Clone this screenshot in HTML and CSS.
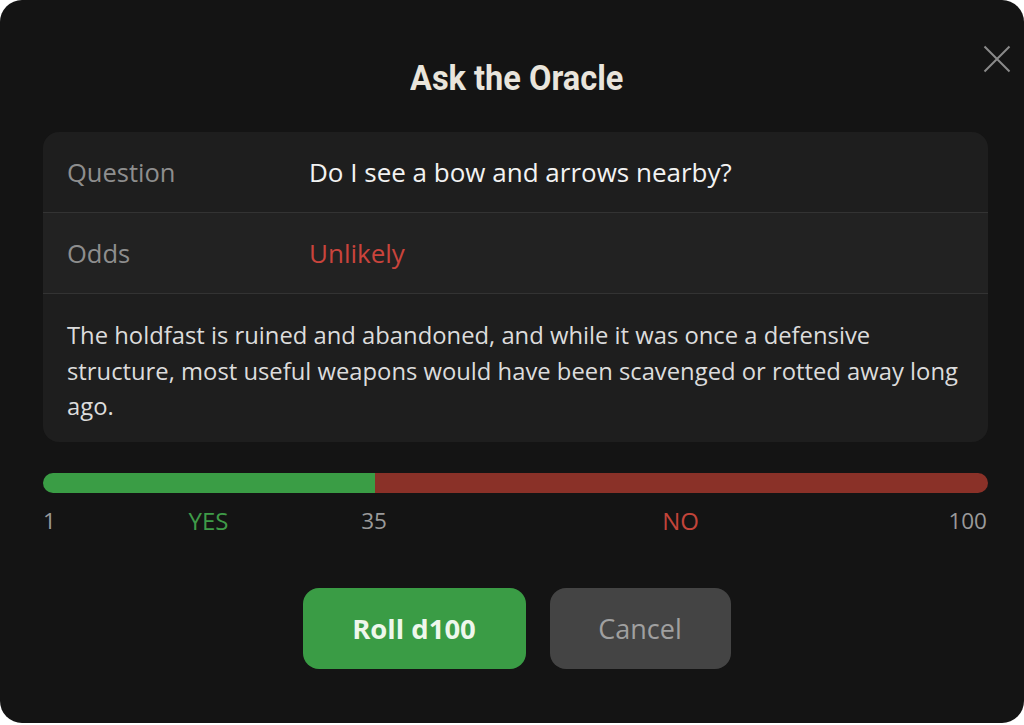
FILE: index.html
```html
<!DOCTYPE html>
<html>
<head>
<meta charset="utf-8">
<link rel="stylesheet" href="styles.css">
</head>
<body>
<div class="modal">
  <button class="close" aria-label="Close">
    <svg width="28" height="28" viewBox="0 0 28 28"><path d="M1.5 1.5 L26.5 26.5 M26.5 1.5 L1.5 26.5" stroke="#8a8a8a" stroke-width="2" fill="none"/></svg>
  </button>
  <h1 class="title"><span class="title-text">Ask the Oracle</span></h1>
  <div class="card">
    <div class="row">
      <span class="label">Question</span>
      <span class="value">Do I see a bow and arrows nearby?</span>
    </div>
    <div class="row row-alt">
      <span class="label">Odds</span>
      <span class="value odds">Unlikely</span>
    </div>
    <p class="desc">The holdfast is ruined and abandoned, and while it was once a defensive structure, most useful weapons would have been scavenged or rotted away long ago.</p>
  </div>
  <div class="scale">
    <div class="bar">
      <div class="yes-part" style="width:35.1%"></div>
      <div class="no-part"></div>
    </div>
    <div class="ticks">
      <span class="num first">1</span>
      <span class="yes-label">YES</span>
      <span class="num mid">35</span>
      <span class="no-label">NO</span>
      <span class="num last">100</span>
    </div>
  </div>
  <div class="actions">
    <button class="btn btn-roll">Roll d100</button>
    <button class="btn btn-cancel">Cancel</button>
  </div>
</div>
</body>
</html>
```
FILE: styles.css
```css
html, body {
  margin: 0;
  padding: 0;
  background: #ffffff;
}
body {
  width: 1024px;
  height: 725px;
  overflow: hidden;
  font-family: "Open Sans", "Noto Sans", sans-serif;
}
.modal {
  position: relative;
  box-sizing: border-box;
  width: 1024px;
  height: 723px;
  background: #141414;
  border-radius: 22px;
  padding: 57px 36px 0 43px;
}
.close {
  position: absolute;
  top: 45px;
  right: 13px;
  background: none;
  border: 0;
  padding: 0;
  width: 28px;
  height: 28px;
  cursor: pointer;
}
.close svg { display: block; }
.title {
  margin: 0 0 31px;
  text-align: center;
  font-family: Roboto, "Liberation Sans", sans-serif;
  font-weight: 700;
  font-size: 35px;
  line-height: 44px;
  color: #e9e5dc;
  padding-left: 3px;
}
.title-text {
  display: inline-block;
  transform: scaleX(0.93);
}
.card {
  background: #1e1e1e;
  border-radius: 16px;
  overflow: hidden;
}
.row {
  display: flex;
  align-items: center;
  height: 80px;
  padding: 0 24px;
  border-bottom: 1px solid #333333;
  font-size: 26px;
}
.label {
  width: 242px;
  color: #8e8e8e;
  font-size: 25.5px;
}
.row-alt {
  background: #222222;
}
.value {
  color: #f2f2f2;
}
.odds {
  color: #c9443c;
}
.desc {
  margin: 0;
  padding: 24px 14px 17px 24px;
  font-size: 23.8px;
  line-height: 35.5px;
  color: #dcdcdc;
}
.scale {
  margin-top: 31px;
}
.bar {
  display: flex;
  height: 20px;
  border-radius: 10px;
  overflow: hidden;
}
.yes-part {
  background: #3a9d45;
}
.no-part {
  flex: 1;
  background: #8a3128;
}
.ticks {
  display: grid;
  grid-template-columns: 0 331px 0 613px 0;
  height: 40px;
  font-size: 22.5px;
  line-height: 40px;
  margin-top: 8px;
}
.ticks span {
  white-space: nowrap;
  text-align: center;
}
.num { color: #9a9a9a; }
.first { text-align: left; }
.last { display: flex; justify-content: flex-end; }
.mid { display: flex; justify-content: center; }
.yes-label { color: #3f9b48; font-size: 24px; }
.no-label { color: #c2443a; font-size: 24px; }
.actions {
  display: flex;
  justify-content: center;
  gap: 24px;
  margin-top: 47px;
  padding-left: 2px;
}
.btn {
  height: 81px;
  border-radius: 16px;
  border: 0;
  font-family: "Open Sans", "Noto Sans", sans-serif;
  cursor: pointer;
}
.btn-roll {
  width: 223px;
  background: #3a9c45;
  color: #eef7ec;
  font-weight: 700;
  font-size: 27.5px;
}
.btn-cancel {
  width: 181px;
  background: #444444;
  color: #a0a0a0;
  font-size: 27px;
}
```
